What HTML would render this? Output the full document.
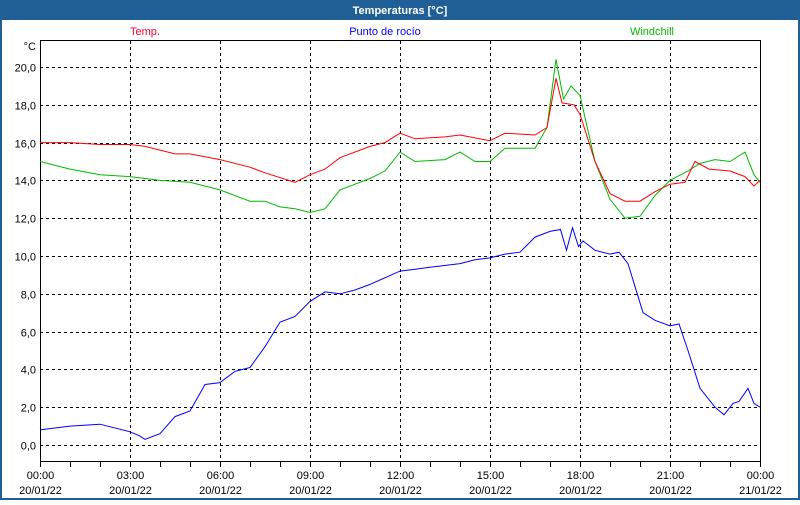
<!DOCTYPE html>
<html><head><meta charset="utf-8"><style>
html,body{margin:0;padding:0;background:#fff}
body{width:800px;height:500px;overflow:hidden;font-family:"Liberation Sans","DejaVu Sans",sans-serif}
</style></head><body>
<svg id="s" width="800" height="500" xmlns="http://www.w3.org/2000/svg" font-family="Liberation Sans, DejaVu Sans, sans-serif" font-size="11">
<rect x="0" y="0" width="800" height="500" fill="#1f5f96"/>
<rect x="2" y="20" width="796" height="478" fill="#fff"/>
<text x="400" y="14" fill="#fff" font-weight="bold" text-anchor="middle">Temperaturas [°C]</text>
<text x="145" y="35" fill="#ff0033" text-anchor="middle">Temp.</text>
<text x="385" y="35" fill="#0000ff" text-anchor="middle">Punto de rocío</text>
<text x="652" y="35" fill="#00bb00" text-anchor="middle">Windchill</text>
<g id="grid" stroke="#000" stroke-width="1" stroke-dasharray="3,3" fill="none"></g>
<rect x="40.5" y="40.5" width="720" height="421" fill="none" stroke="#000"/>
<g id="ticks" stroke="#000"></g>
<g id="lab" fill="#000"></g>
<polyline id="g" fill="none" stroke="#00bb00"/>
<polyline id="r" fill="none" stroke="#ff0000"/>
<polyline id="b" fill="none" stroke="#0000ff"/>
</svg>
<script>
var NS="http://www.w3.org/2000/svg";
function X(h){return 40+30*h}function Y(v){return 445-18.9*v}
function el(p,t,a,tx){var e=document.createElementNS(NS,t);for(var k in a)e.setAttribute(k,a[k]);if(tx)e.textContent=tx;document.getElementById(p).appendChild(e);}
for(var v=0;v<=20;v+=2){var y=Math.round(Y(v))+.5;el('grid','line',{x1:40,x2:760,y1:y,y2:y});el('lab','text',{x:36,y:y+4,'text-anchor':'end'},v.toFixed(1).replace('.',','));}
el('lab','text',{x:36,y:50,'text-anchor':'end'},'°C');
var d=['20/01/22','20/01/22','20/01/22','20/01/22','20/01/22','20/01/22','20/01/22','20/01/22','21/01/22'];
for(var i=0;i<=8;i++){var x=X(3*i)+.5;if(i>0&&i<8)el('grid','line',{x1:x,x2:x,y1:41,y2:461});
el('lab','text',{x:x,y:479,'text-anchor':'middle'},(i==8?'00':('0'+3*i).slice(-2))+':00');el('lab','text',{x:x,y:494,'text-anchor':'middle'},d[i]);}
for(var h=0;h<=24;h++){var x=X(h)+.5;el('ticks','line',{x1:x,x2:x,y1:461,y2:467});}
function P(id,a){var s=[];for(var i=0;i<a.length;i+=2)s.push(X(a[i]).toFixed(1)+','+Y(a[i+1]).toFixed(1));document.getElementById(id).setAttribute('points',s.join(' '));}
P('r',[0,16,1,16,2,15.9,3,15.9,3.5,15.8,4.5,15.4,5,15.4,6,15.1,7,14.7,7.5,14.4,8.5,13.9,9,14.3,9.5,14.6,10,15.2,11,15.8,11.5,16,12,16.5,12.5,16.2,13.5,16.3,14,16.4,15,16.1,15.5,16.5,16.5,16.4,16.9,16.8,17.2,19.4,17.4,18.1,17.8,18.0,18,17.5,18.5,15,19,13.3,19.5,12.9,20,12.9,20.5,13.4,21,13.8,21.5,13.9,21.83,15.0,22.3,14.6,23,14.5,23.5,14.2,23.8,13.7,24,14]);
P('g',[0,15,1,14.6,2,14.3,3,14.2,4,14.0,5,13.9,6,13.5,7,12.9,7.5,12.9,8,12.6,8.5,12.5,9,12.3,9.5,12.5,10,13.5,10.5,13.8,11,14.1,11.5,14.5,12,15.5,12.5,15.0,13.5,15.1,14,15.5,14.5,15.0,15,15.0,15.5,15.7,16.5,15.7,16.9,16.8,17.2,20.4,17.45,18.3,17.7,19.0,18,18.5,18.5,15,19,13,19.5,12.0,20,12.1,20.5,13.2,21,14.0,21.6,14.5,22,14.9,22.5,15.1,23,15.0,23.5,15.5,23.8,14.3,24,13.9]);
P('b',[0,0.8,0.5,0.9,1,1.0,2,1.1,3,0.7,3.3,0.5,3.5,0.3,4,0.6,4.5,1.5,5,1.8,5.5,3.2,6,3.3,6.5,3.9,7,4.1,7.5,5.2,8,6.5,8.5,6.8,9,7.6,9.5,8.1,10,8.0,10.5,8.2,11,8.5,12,9.2,12.5,9.3,13,9.4,14,9.6,14.5,9.8,15,9.9,15.5,10.1,16,10.2,16.5,11.0,17,11.3,17.35,11.4,17.55,10.3,17.75,11.5,17.95,10.5,18.1,10.8,18.5,10.3,19,10.1,19.3,10.2,19.6,9.6,20.1,7.0,20.5,6.6,21,6.3,21.3,6.4,21.6,5.0,22,3.0,22.5,2.0,22.8,1.6,23.1,2.2,23.3,2.3,23.6,3.0,23.8,2.2,24,2.0]);
</script>
</body></html>
